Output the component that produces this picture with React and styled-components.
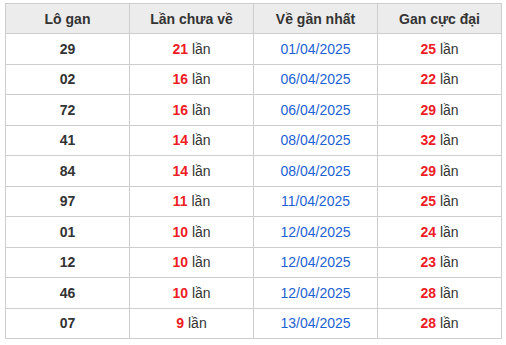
import React from "react";
import styled, { createGlobalStyle } from "styled-components";

const Global = createGlobalStyle`
  html, body { margin: 0; padding: 0; background: #fff; }
  body { font-family: "Liberation Sans", Arial, sans-serif; }
`;

const Wrap = styled.div`
  padding: 3px 5px 0 5px;
`;

const Table = styled.table`
  width: 497px;
  border-collapse: collapse;
  table-layout: fixed;
  font-size: 14px;
  color: #333;
`;

const Th = styled.th`
  background: #ececec;
  border: 1px solid #cdcdcd;
  height: 30px;
  padding: 0;
  font-weight: bold;
  color: #333;
  text-align: center;
  box-sizing: border-box;
`;

const Td = styled.td`
  border: 1px solid #cdcdcd;
  height: 30.5px;
  padding: 0;
  text-align: center;
  box-sizing: border-box;
  font-weight: ${(p) => (p.$bold ? "bold" : "normal")};
  color: ${(p) => (p.$blue ? "#1c62d3" : "#333")};
`;

const Red = styled.span`
  color: #ee1c25;
  font-weight: bold;
`;

const rows = [
  ["29", 21, "01/04/2025", 25],
  ["02", 16, "06/04/2025", 22],
  ["72", 16, "06/04/2025", 29],
  ["41", 14, "08/04/2025", 32],
  ["84", 14, "08/04/2025", 29],
  ["97", 11, "11/04/2025", 25],
  ["01", 10, "12/04/2025", 24],
  ["12", 10, "12/04/2025", 23],
  ["46", 10, "12/04/2025", 28],
  ["07", 9, "13/04/2025", 28],
];

export default function App() {
  return (
    <Wrap>
      <Global />
      <Table>
        <thead>
          <tr>
            <Th>Lô gan</Th>
            <Th>Lần chưa về</Th>
            <Th>Về gần nhất</Th>
            <Th>Gan cực đại</Th>
          </tr>
        </thead>
        <tbody>
          {rows.map(([n, a, d, m]) => (
            <tr key={n}>
              <Td $bold>{n}</Td>
              <Td>
                <Red>{a}</Red> lần
              </Td>
              <Td $blue>{d}</Td>
              <Td>
                <Red>{m}</Red> lần
              </Td>
            </tr>
          ))}
        </tbody>
      </Table>
    </Wrap>
  );
}
